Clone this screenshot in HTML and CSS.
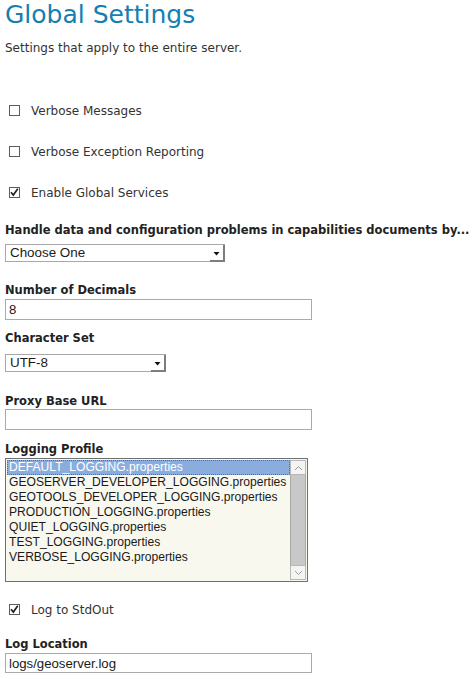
FILE: index.html
```html
<!DOCTYPE html>
<html>
<head>
<meta charset="utf-8">
<title>Global Settings</title>
<link rel="stylesheet" href="styles.css">
</head>
<body>
<div class="page">
  <h1 class="title">Global Settings</h1>
  <p class="desc">Settings that apply to the entire server.</p>

  <div class="check first">
    <span class="box"></span><span class="check-label">Verbose Messages</span>
  </div>
  <div class="check">
    <span class="box"></span><span class="check-label">Verbose Exception Reporting</span>
  </div>
  <div class="check">
    <span class="box"><svg width="11" height="11" viewBox="0 0 11 11"><path d="M2 5.2 L4.3 8 L8.8 1.8" fill="none" stroke="#222" stroke-width="1.7"/></svg></span><span class="check-label">Enable Global Services</span>
  </div>

  <div class="label l-handle">Handle data and configuration problems in capabilities documents by...</div>
  <div class="select s-choose"><span class="select-text">Choose One</span><span class="select-btn"><svg width="7" height="5" viewBox="0 0 7 5"><path d="M0.5 1 L6.5 1 L3.5 4.5 Z" fill="#111"/></svg></span></div>

  <div class="label l-num">Number of Decimals</div>
  <div class="input i-num">8</div>

  <div class="label l-char">Character Set</div>
  <div class="select s-utf"><span class="select-text">UTF-8</span><span class="select-btn"><svg width="7" height="5" viewBox="0 0 7 5"><path d="M0.5 1 L6.5 1 L3.5 4.5 Z" fill="#111"/></svg></span></div>

  <div class="label l-proxy">Proxy Base URL</div>
  <div class="input i-proxy"></div>

  <div class="label l-logp">Logging Profile</div>
  <div class="listbox">
    <div class="list-items">
      <div class="item selected">DEFAULT_LOGGING.properties</div>
      <div class="item">GEOSERVER_DEVELOPER_LOGGING.properties</div>
      <div class="item">GEOTOOLS_DEVELOPER_LOGGING.properties</div>
      <div class="item">PRODUCTION_LOGGING.properties</div>
      <div class="item">QUIET_LOGGING.properties</div>
      <div class="item">TEST_LOGGING.properties</div>
      <div class="item">VERBOSE_LOGGING.properties</div>
    </div>
    <div class="scrollbar">
      <div class="sb-btn"><svg width="9" height="6" viewBox="0 0 9 6"><path d="M1 5 L4.5 1.5 L8 5" fill="none" stroke="#9a9a9a" stroke-width="1"/></svg></div>
      <div class="sb-track"></div>
      <div class="sb-btn"><svg width="9" height="6" viewBox="0 0 9 6"><path d="M1 1 L4.5 4.5 L8 1" fill="none" stroke="#9a9a9a" stroke-width="1"/></svg></div>
    </div>
  </div>

  <div class="check c-stdout">
    <span class="box"><svg width="11" height="11" viewBox="0 0 11 11"><path d="M2 5.2 L4.3 8 L8.8 1.8" fill="none" stroke="#222" stroke-width="1.7"/></svg></span><span class="check-label">Log to StdOut</span>
  </div>

  <div class="label l-loc">Log Location</div>
  <div class="input i-loc">logs/geoserver.log</div>
</div>
</body>
</html>
```

FILE: styles.css
```css
html, body {
  margin: 0;
  padding: 0;
  background: #ffffff;
}

.page {
  padding: 0 0 0 5px;
  font-family: "DejaVu Sans", sans-serif;
  font-size: 12px;
  line-height: 16px;
  color: #333333;
}

.title {
  margin: 0;
  font-size: 25px;
  line-height: 30px;
  font-weight: normal;
  color: #1380b1;
}

.desc {
  margin: 10px 0 0 0;
}

.check {
  display: flex;
  align-items: flex-start;
  height: 16px;
  margin-top: 25px;
}

.check.first {
  margin-top: 47px;
}

.check.c-stdout {
  margin-top: 20px;
}

.box {
  box-sizing: border-box;
  width: 11px;
  height: 11px;
  margin: 2px 0 0 4px;
  border: 1px solid #5c5c5c;
  background: #ffffff;
  position: relative;
  display: block;
}

.box svg {
  position: absolute;
  left: -1px;
  top: -1px;
}

.check-label {
  margin-left: 11px;
}

.label {
  font-weight: bold;
  font-size: 11.5px;
  white-space: nowrap;
  color: #222222;
}

.l-handle { margin-top: 21px; }
.l-num { margin-top: 20px; }
.l-char { margin-top: 10px; }
.l-proxy { margin-top: 21px; }
.l-logp { margin-top: 11px; }
.l-loc { margin-top: 18px; }

.select {
  box-sizing: border-box;
  display: flex;
  height: 18px;
  border: 1px solid #a8a8a8;
  border-right: none;
  border-bottom: none;
  background: #ffffff;
  font-family: "Liberation Sans", Arial, sans-serif;
  font-size: 13.4px;
  line-height: 16px;
  color: #1a1a1a;
}

.s-choose {
  width: 220px;
  margin-top: 6px;
}

.s-utf {
  width: 161px;
  margin-top: 8px;
}

.select-text {
  flex: 1;
  padding-left: 4px;
  border-bottom: 1px solid #a8a8a8;
}

.select-btn {
  box-sizing: border-box;
  width: 15px;
  display: flex;
  align-items: center;
  justify-content: center;
  border-right: 2px solid #7d7d7d;
  border-bottom: 2px solid #7d7d7d;
  padding-top: 1px;
}

.input {
  box-sizing: border-box;
  width: 307px;
  height: 21px;
  border: 1px solid #aaaaaa;
  background: #ffffff;
  padding: 1px 0 0 3px;
  font-family: "Liberation Sans", Arial, sans-serif;
  font-size: 13.2px;
  line-height: 17px;
  color: #1a1a1a;
}

.i-num { margin-top: 1px; }
.i-proxy { margin-top: 0; }
.i-loc { margin-top: 1px; height: 20px; }

.listbox {
  box-sizing: border-box;
  display: flex;
  width: 303px;
  height: 124px;
  margin-top: 1px;
  border: 1px solid #6f6f6f;
  background: #f9f8ef;
  font-family: "Liberation Sans", Arial, sans-serif;
  font-size: 12.1px;
  line-height: 15px;
  color: #1a1a1a;
}

.list-items {
  flex: 1;
  min-width: 0;
  overflow: hidden;
  padding-top: 1px;
  padding-left: 1px;
}

.item {
  padding-left: 2px;
  height: 15px;
  white-space: nowrap;
}

.item.selected {
  background: #8badde;
  color: #ffffff;
  outline: 1px dotted #4d6e9e;
  outline-offset: -1px;
}

.scrollbar {
  flex: none;
  width: 16px;
  display: flex;
  flex-direction: column;
  padding: 1px 1px 1px 0;
}

.sb-btn {
  box-sizing: border-box;
  height: 15px;
  display: flex;
  align-items: center;
  justify-content: center;
  background: #f4f4f2;
  border: 1px solid #b8b8b8;
}

.sb-track {
  flex: 1;
  background: #c8c8c8;
  border-left: 1px solid #a9a9a9;
  border-right: 1px solid #a9a9a9;
}
```
